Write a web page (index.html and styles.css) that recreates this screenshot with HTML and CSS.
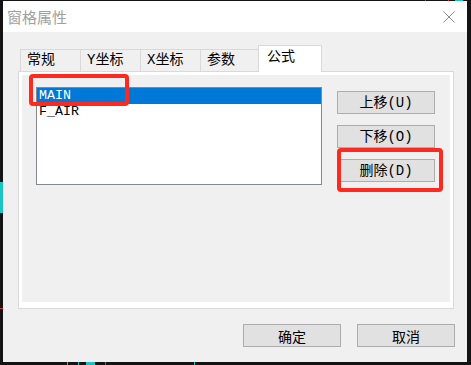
FILE: index.html
```html
<!DOCTYPE html>
<html lang="zh-CN">
<head>
  <meta charset="UTF-8">
  <meta name="viewport" content="width=device-width, initial-scale=1.0">
  <title>窗格属性</title>
  <link rel="stylesheet" href="styles.css">
</head>
<body>
  <div class="window">
    <div class="titlebar">
      <span class="title">窗格属性</span>
      <svg class="close" width="12" height="12" viewBox="0 0 12 12" aria-label="关闭">
        <path d="M0.5 0.5 L11.5 11.5 M11.5 0.5 L0.5 11.5" stroke="#8c8c8c" stroke-width="1" fill="none"/>
      </svg>
    </div>
    <div class="client">
      <div class="tabs">
        <div class="tab">常规</div>
        <div class="tab">Y坐标</div>
        <div class="tab">X坐标</div>
        <div class="tab">参数</div>
        <div class="tab active">公式</div>
      </div>
      <div class="panel">
        <div class="page">
          <div class="listbox">
            <div class="item selected">MAIN</div>
            <div class="item">F_AIR</div>
          </div>
          <div class="side-buttons">
            <button class="btn side-btn">上移(U)</button>
            <button class="btn side-btn">下移(O)</button>
            <button class="btn side-btn">删除(D)</button>
          </div>
        </div>
      </div>
      <div class="footer">
        <button class="btn footer-btn">确定</button>
        <button class="btn footer-btn">取消</button>
      </div>
    </div>
    <div class="mark mark-list"></div>
    <div class="mark mark-delete"></div>
  </div>
</body>
</html>
```

FILE: styles.css
```css
body {
  margin: 0;
  width: 471px;
  height: 365px;
  overflow: hidden;
  background:
    linear-gradient(#19c4c4, #19c4c4) 0 182px / 3px 31px no-repeat,
    linear-gradient(#e03030, #e03030) 0 308px / 3px 1px no-repeat,
    linear-gradient(#19c4c4, #19c4c4) 67px 362px / 1px 3px no-repeat,
    linear-gradient(#19c4c4, #19c4c4) 78px 362px / 1px 3px no-repeat,
    linear-gradient(#19c4c4, #19c4c4) 86px 362px / 9px 3px no-repeat,
    linear-gradient(#e03030, #e03030) 105px 362px / 1px 3px no-repeat,
    linear-gradient(#19c4c4, #19c4c4) 194px 362px / 1px 3px no-repeat,
    linear-gradient(#e03030, #e03030) 425px 0 / 1px 1px no-repeat,
    linear-gradient(#e03030, #e03030) 448px 0 / 1px 1px no-repeat,
    linear-gradient(#19c4c4, #19c4c4) 455px 0 / 8px 1px no-repeat,
    #141414;
}
.window {
  position: relative;
  margin: 1px 0 0 3px;
  width: 464px;
  height: 361px;
  background-color: #f0f0f0;
  display: flex;
  flex-direction: column;
}
.titlebar {
  height: 31px;
  background-color: #ffffff;
  display: flex;
  align-items: center;
  justify-content: space-between;
  padding: 0 12px 0 4px;
}
.title {
  font-family: "Noto Sans CJK SC", sans-serif;
  font-size: 15px;
  color: #a0a0a0;
  line-height: 20px;
}
.client {
  padding: 13px 13px 0 15px;
  display: flex;
  flex-direction: column;
}
.tabs {
  display: flex;
  align-items: flex-end;
  height: 27px;
  padding-left: 2px;
  margin-bottom: -1px;
  position: relative;
  z-index: 1;
  font-family: "Liberation Mono", "Noto Sans CJK SC", monospace;
  font-size: 14px;
  color: #000000;
}
.tab {
  box-sizing: border-box;
  width: 60px;
  height: 22px;
  margin-bottom: 1px;
  padding-left: 6px;
  border-left: 1px solid #d9d9d9;
  border-top: 1px solid #d9d9d9;
  line-height: 21px;
  white-space: nowrap;
}
.tab.active {
  width: 64px;
  height: 27px;
  margin-bottom: 0;
  margin-left: -2px;
  padding: 2px 0 0 8px;
  line-height: 18px;
  background-color: #ffffff;
  border-right: 1px solid #d9d9d9;
}
.panel {
  box-sizing: border-box;
  width: 436px;
  border: 1px solid #d9d9d9;
  background-color: #ffffff;
  padding: 3px 3px 6px 3px;
}
.page {
  height: 227px;
  box-sizing: border-box;
  background-color: #f0f0f0;
  display: flex;
  align-items: flex-start;
  padding: 12px 0 0 14px;
}
.listbox {
  box-sizing: border-box;
  width: 286px;
  height: 98px;
  border: 1px solid #828790;
  background-color: #ffffff;
  font-family: "Liberation Mono", monospace;
  font-size: 13.3px;
  color: #000000;
}
.item {
  height: 16px;
  line-height: 16px;
  padding-left: 2px;
}
.item.selected {
  background-color: #0078d7;
  color: #ffffff;
}
.side-buttons {
  display: flex;
  flex-direction: column;
  gap: 11px;
  margin: 4px 0 0 15px;
}
.btn {
  box-sizing: border-box;
  width: 98px;
  height: 23px;
  padding: 0;
  background-color: #e1e1e1;
  border: 1px solid #adadad;
  color: #000000;
  font-size: 14px;
  line-height: 20px;
}
.side-btn {
  font-family: "Liberation Mono", "Noto Sans CJK SC", monospace;
}
.footer {
  display: flex;
  justify-content: flex-end;
  gap: 16px;
  margin: 15px -1px 0 0;
}
.footer-btn {
  font-family: "Noto Sans CJK SC", sans-serif;
}
.mark {
  position: absolute;
  box-sizing: border-box;
  border: 4px solid #ff2a1f;
  border-radius: 4px;
}
.mark-list {
  left: 26px;
  top: 73px;
  width: 100px;
  height: 32px;
}
.mark-delete {
  left: 334px;
  top: 147px;
  width: 106px;
  height: 44px;
}
```
